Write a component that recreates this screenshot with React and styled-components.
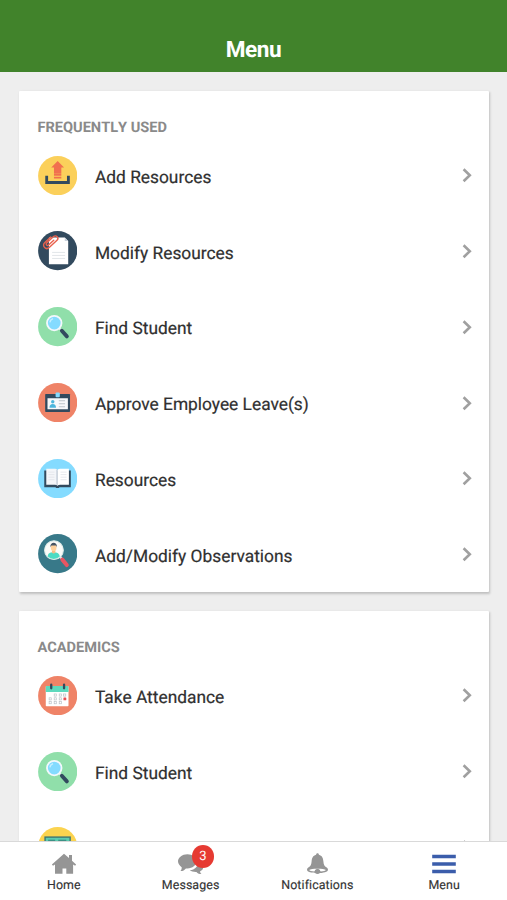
import React from "react";
import styled, { createGlobalStyle } from "styled-components";

const GlobalStyle = createGlobalStyle`
  * { box-sizing: border-box; }
  body { margin: 0; background: #eeeeee; font-family: Roboto, "Liberation Sans", sans-serif; text-rendering: geometricPrecision; }
`;

const Screen = styled.div`
  display: flex;
  flex-direction: column;
  height: 900px;
  overflow: hidden;
  background: #eeeeee;
`;

const Header = styled.header`
  flex: none;
  height: 71.5px;
  padding-top: 28px;
  display: flex;
  align-items: center;
  justify-content: center;
  background: #41832b;
`;

const Title = styled.h1`
  margin: 0;
  color: #fff;
  font-size: 22.6px;
  line-height: 26px;
  font-weight: 700;
  letter-spacing: -0.4px;
`;

const Content = styled.main`
  flex: 1;
  min-height: 0;
  overflow: hidden;
  display: flex;
  flex-direction: column;
  gap: 18.6px;
  padding: 19px 18.5px 0 19.4px;
`;

const Card = styled.section`
  flex: none;
  background: #fff;
  border-radius: 1px;
  box-shadow: 1px 1.5px 2.5px rgba(0, 0, 0, 0.2);
`;

const CardTitle = styled.h2`
  margin: 0;
  height: 47px;
  padding: 27px 18px 0;
  color: #8a8a8a;
  font-size: 14.6px;
  line-height: 18px;
  font-weight: 700;
  font-kerning: none;
`;

const Row = styled.div`
  display: flex;
  align-items: center;
  height: 75.75px;
  padding: 0 16px 0 18.2px;
`;

const RowIcon = styled.svg`
  flex: none;
  width: 39.4px;
  height: 39.4px;
`;

const RowLabel = styled.span`
  flex: 1;
  padding: 5px 0 0 18px;
  color: #303030;
  font-size: 17.35px;
  line-height: 22px;
  -webkit-text-stroke: 0.2px #303030;
`;

const Chevron = styled.svg`
  flex: none;
  width: 12px;
  height: 16px;
`;

const NavBar = styled.nav`
  flex: none;
  display: grid;
  grid-template-columns: repeat(4, 1fr);
  height: 59px;
  border-top: 1.5px solid #d9d9d9;
  background: #fff;
`;

const NavItem = styled.div`
  display: flex;
  flex-direction: column;
  align-items: center;
  padding: 10px 0 0 1px;
`;

const NavIconBox = styled.div`
  position: relative;
  width: 28px;
  height: 24px;
`;

const NavIcon = styled.svg`
  display: block;
  width: 28px;
  height: 24px;
`;

const NavLabel = styled.span`
  margin-top: 2px;
  color: #333;
  font-size: 12.4px;
  line-height: 16px;
  letter-spacing: 0.1px;
  -webkit-text-stroke: 0.15px #333;
`;

const Badge = styled.span`
  position: absolute;
  left: 15px;
  top: -7px;
  width: 22.5px;
  height: 23px;
  border-radius: 50%;
  background: #e63a32;
  color: #fff;
  font-size: 13px;
  line-height: 24px;
  text-align: center;
`;

const Disc = ({ fill }) => <circle cx="19.5" cy="19.5" r="19.4" fill={fill} />;

const glyphs = {
  upload: (
    <>
      <Disc fill="#fbd05b" />
      <path d="M8.6 19.6v6.6h21.5v-6.6" fill="none" stroke="#324a5e" strokeWidth="2.8" />
      <path d="M19.5 4.9 25.8 11.4h-2.7v6.1h-7.3v-6.1h-2.7z" fill="#f1704f" />
      <path d="M15.8 18.7h7.3M15.8 21.5h7.3" stroke="#f1704f" strokeWidth="1.7" />
    </>
  ),
  document: (
    <>
      <Disc fill="#324a5e" />
      <path d="M10.8 6.5h15.7l3.4 3.5v22.8H10.8z" fill="#fff" />
      <path d="M26.5 6.5V10h3.4z" fill="#c9d2dc" />
      <path d="M14 21.2h12.8M14 24.2h12.8M14 27.2h12.8" stroke="#dfe3e7" strokeWidth=".9" />
      <g transform="translate(12.7 10.5) rotate(47)" fill="none" stroke="#e8614d" strokeWidth="1.4" strokeLinecap="round">
        <path d="M-3.4-3V5.2a3.3 3.3 0 0 0 6.6 0V-5.4a2.5 2.5 0 0 0-5 0V4a1.4 1.4 0 0 0 2.8 0v-7" />
      </g>
    </>
  ),
  search: (
    <>
      <Disc fill="#90dfaa" />
      <path d="m21 21 3 3" stroke="#e6e9ee" strokeWidth="2" />
      <path d="m23.6 23.5 5 5.6" stroke="#324a5e" strokeWidth="3.8" strokeLinecap="round" />
      <circle cx="16.1" cy="15.9" r="7.2" fill="#84dbff" stroke="#f3f8fc" strokeWidth="1.8" />
      <path d="M11.8 15.2a4.5 4.5 0 0 1 3.1-3.7" fill="none" stroke="#c6efff" strokeWidth="1.3" />
    </>
  ),
  idCard: (
    <>
      <Disc fill="#ef8367" />
      <rect x="7.1" y="10.8" width="24.6" height="17.8" rx=".7" fill="#324a5e" />
      <rect x="9.4" y="15.1" width="20.2" height="10.9" fill="#f7f9fb" />
      <rect x="17.4" y="9.4" width="4.2" height="4.6" rx="1" fill="#84dbff" />
      <circle cx="14.6" cy="18.5" r="1.7" fill="#4cb6dc" />
      <path d="M11.4 24.4c0-2.2 1-3.5 3.2-3.5s3.2 1.3 3.2 3.5z" fill="#4cb6dc" />
      <path d="M20.6 17.5h6.2M20.6 20.5h6.2M20.6 23.5h6.2" stroke="#bcc4ca" strokeWidth="1" />
    </>
  ),
  book: (
    <>
      <Disc fill="#84dbff" />
      <path d="M6.2 11.5h26.3V28H21.4l-1 .8h-2.2l-1-.8H6.2z" fill="#324a5e" />
      <path d="M8.2 9.7h8.6q2 0 2.6 1.2v15.7q-.7-1.2-2.6-1.2H8.2z" fill="#f4f6f9" />
      <path d="M30.6 9.7H22q-2 0-2.6 1.2v15.7q.7-1.2 2.6-1.2h8.6z" fill="#fff" />
      <path d="M17.8 10.2q1.2.3 1.6 1.2v15.2q-.5-.9-1.6-1.1z" fill="#d4dbe4" />
      <path d="M10.3 13h6M10.3 15.5h6M10.3 18h6M10.3 20.5h6M22.3 13h6M22.3 15.5h6M22.3 18h6M22.3 20.5h6" stroke="#e0e3e8" strokeWidth=".8" />
    </>
  ),
  observe: (
    <>
      <Disc fill="#387989" />
      <path d="m21.5 22 3 3.5" stroke="#e5e5e5" strokeWidth="2" />
      <path d="m24.1 25.4 4.4 5.3" stroke="#e85562" strokeWidth="4" strokeLinecap="round" />
      <circle cx="15.8" cy="16" r="9.3" fill="#fbfbf8" stroke="#dceae8" strokeWidth="1" />
      <path d="M9.6 22.3c.2-3.2 1.9-4.3 5.8-4.3s5.9 1.3 6.2 4.3a8.7 8.7 0 0 1-12 0z" fill="#4cdbc4" />
      <path d="M13.8 16h3.4v2.5q-1.7 1.5-3.4 0z" fill="#f2bd86" />
      <ellipse cx="15.5" cy="13.4" rx="2.8" ry="3.7" fill="#ffd19c" />
      <path d="M12.3 13.2c-.9-6 7.3-6 6.4 0l-.8-1.8h-4.6z" fill="#465464" />
    </>
  ),
  calendar: (
    <>
      <Disc fill="#ef8367" />
      <rect x="7.7" y="9.8" width="22.5" height="20.1" rx=".8" fill="#fff" />
      <path d="M8.5 9.8h20.9q.8 0 .8.8v5.2H7.7v-5.2q0-.8.8-.8z" fill="#5dd9bd" />
      <path d="M13.1 8.6v3.5M25.8 8.6v3.5" stroke="#324a5e" strokeWidth="2.3" strokeLinecap="round" />
      <g fill="#fff" stroke="#b7bec4" strokeWidth=".65">
        {[[16, 17.8], [21, 17.8], [25.4, 17.8], [11, 21.6], [16, 21.6], [21, 21.6], [11, 25.4], [16, 25.4], [21, 25.4]].map(([x, y]) => (
          <rect key={`${x}-${y}`} x={x} y={y} width="2.1" height="2.1" />
        ))}
      </g>
      <rect x="25.2" y="21.3" width="2.8" height="2.8" rx=".5" fill="#e94f54" />
    </>
  ),
  board: (
    <>
      <Disc fill="#fbd34f" />
      <rect x="7" y="10" width="24.8" height="17" fill="#5ccbb0" stroke="#3f7773" strokeWidth="1.4" />
      <path d="M10 13h7M20 13h8" stroke="#327f77" strokeWidth="1" />
    </>
  ),
};

const sections = [
  {
    title: "FREQUENTLY USED",
    rows: [
      ["Add Resources", "upload"],
      ["Modify Resources", "document"],
      ["Find Student", "search"],
      ["Approve Employee Leave(s)", "idCard"],
      ["Resources", "book"],
      ["Add/Modify Observations", "observe"],
    ],
  },
  {
    title: "ACADEMICS",
    rows: [
      ["Take Attendance", "calendar"],
      ["Find Student", "search"],
      ["", "board"],
    ],
  },
];

const navItems = [
  {
    label: "Home",
    icon: <path d="m14 1.7 5 4.4V3h3v5.8l4.1 3.6-1 1.3-2-1.2v9.2h-6.8v-5.2h-3.8v5.2H5v-9.2l-2 1.2-1.1-1.3z" fill="#959595" />,
  },
  {
    label: "Messages",
    badge: "3",
    icon: (
      <>
        <path d="M10.4 2.2c5.2 0 9 3.3 9 7.1s-3.8 7.2-9 7.2l-1.5-.1c-1.4 1.8-3.4 2.8-5.6 2.6 1-.7 1.5-2.1 1.4-3.8C2.7 13.8 1 11.8 1 9.3c0-3.8 4.1-7.1 9.4-7.1z" fill="#959595" />
        <path d="M12.8 18.2c5.1-.4 8.6-3.9 8.5-8.5 3 1.2 4.9 3.2 4.9 5.5 0 1.8-1.2 3.3-3.1 4.1.1 1.3.5 2.3 1.4 2.8-2 0-3.8-.5-5.1-2.2-2.6.1-5-.4-6.6-1.7z" fill="#959595" />
      </>
    ),
  },
  {
    label: "Notifications",
    icon: (
      <>
        <path d="M14.5 1.2c.9 0 1.4.6 1.4 1.5 3.2.8 4.2 3.3 4.5 6.7.2 3.2 1 4.6 3.3 6.2.9.7 1.3 1.4 1.3 2.2 0 2-4.5 3.4-10.5 3.4S4 19.8 4 17.8c0-.8.4-1.5 1.3-2.2 2.3-1.6 3.1-3 3.3-6.2.3-3.4 1.3-5.9 4.5-6.7 0-.9.5-1.5 1.4-1.5z" fill="#959595" />
        <path d="M6.1 18.1c1.1-.8 4.2-1.3 8.4-1.3s7.3.5 8.4 1.3c-.5.7-2.4 1.2-5.2 1.4a3.4 3.4 0 0 0-6.4 0c-2.8-.2-4.7-.7-5.2-1.4z" fill="#fff" />
        <circle cx="14.5" cy="19.5" r="2.5" fill="#959595" />
      </>
    ),
  },
  {
    label: "Menu",
    icon: <path d="M2.2 4.5h23.6M2.2 12h23.6M2.2 19.5h23.6" stroke="#3b5dab" strokeWidth="3.4" />,
  },
];

export default function App() {
  return (
    <>
      <GlobalStyle />
      <Screen>
        <Header>
          <Title>Menu</Title>
        </Header>
        <Content>
          {sections.map((section) => (
            <Card key={section.title}>
              <CardTitle>{section.title}</CardTitle>
              {section.rows.map(([label, icon]) => (
                <Row key={icon}>
                  <RowIcon viewBox="0 0 39 39">{glyphs[icon]}</RowIcon>
                  <RowLabel>{label}</RowLabel>
                  <Chevron viewBox="0 0 12 16">
                    <path d="m2.6 2.2 6.2 6-6.2 6" fill="none" stroke="#a0a0a0" strokeWidth="2.6" />
                  </Chevron>
                </Row>
              ))}
            </Card>
          ))}
        </Content>
        <NavBar>
          {navItems.map(({ label, icon, badge }) => (
            <NavItem key={label}>
              <NavIconBox>
                <NavIcon viewBox="0 0 28 24">{icon}</NavIcon>
                {badge && <Badge>{badge}</Badge>}
              </NavIconBox>
              <NavLabel>{label}</NavLabel>
            </NavItem>
          ))}
        </NavBar>
      </Screen>
    </>
  );
}
